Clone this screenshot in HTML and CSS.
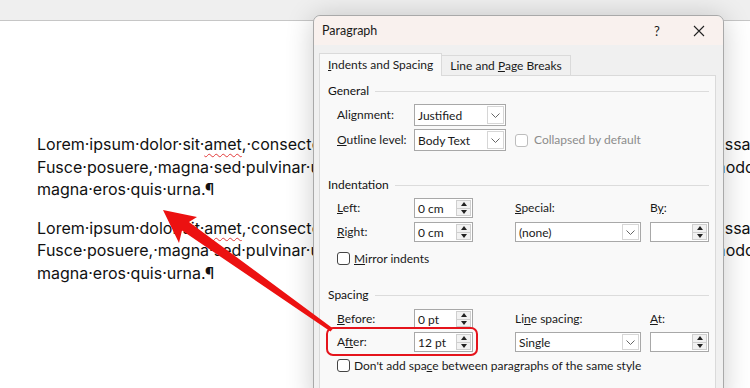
FILE: index.html
```html
<!DOCTYPE html>
<html lang="en">
<head>
    <meta charset="UTF-8">
    <meta name="viewport" content="width=device-width, initial-scale=1.0">
    <title>Paragraph</title>
    <link rel="stylesheet" href="styles.css">
</head>
<body>
    <div class="ribbon"></div>
    <div class="page">
        <p class="para">
            <span class="ln">Lorem·ipsum·dolor·sit·<span class="typo">amet</span>,·consec<span class="stretch">tetuer·adipiscing·elit.·Maecenas·porttitor·congue·m</span>assa.</span>
            <span class="ln">Fusce·posuere,·magna·sed·pulvinar·ultricies,·purus·lectus·malesuada·libero,·sit·amet·commodo</span>
            <span class="ln">magna·eros·quis·urna.¶</span>
        </p>
        <p class="para">
            <span class="ln">Lorem·ipsum·dolor·sit·<span class="typo">amet</span>,·consec<span class="stretch">tetuer·adipiscing·elit.·Maecenas·porttitor·congue·m</span>assa.</span>
            <span class="ln">Fusce·posuere,·magna·sed·pulvinar·ultricies,·purus·lectus·malesuada·libero,·sit·amet·commodo</span>
            <span class="ln">magna·eros·quis·urna.¶</span>
        </p>
    </div>

    <div class="dialog">
        <div class="titlebar">
            <span class="title">Paragraph</span>
            <span class="help">?</span>
            <span class="close">
                <svg width="12" height="12" viewBox="0 0 12 12"><path d="M1 1L11 11M11 1L1 11" stroke="#222" stroke-width="1.1" fill="none"/></svg>
            </span>
        </div>
        <div class="tabs">
            <div class="tab active"><u>I</u>ndents and Spacing</div>
            <div class="tab">Line and <u>P</u>age Breaks</div>
        </div>
        <div class="panel">
            <div class="group-title">General</div>
            <div class="grid general">
                <label>Ali<u>g</u>nment:</label>
                <div class="select w92"><span class="val">Justified</span><span class="drop"><svg width="9" height="5" viewBox="0 0 9 5"><path d="M0.5 0.5L4.5 4.5L8.5 0.5" stroke="#666" fill="none"/></svg></span></div>
                <span></span><span></span>
                <label><u>O</u>utline level:</label>
                <div class="select w92"><span class="val">Body Text</span><span class="drop"><svg width="9" height="5" viewBox="0 0 9 5"><path d="M0.5 0.5L4.5 4.5L8.5 0.5" stroke="#666" fill="none"/></svg></span></div>
                <div class="check disabled span2"><span class="box"></span>Collapsed by default</div>
            </div>

            <div class="group-title gap-indent">Indentation</div>
            <div class="grid boxes">
                <label><u>L</u>eft:</label>
                <div class="spin"><span class="val">0 cm</span><span class="arrows"><span class="up"></span><span class="down"></span></span></div>
                <label><u>S</u>pecial:</label>
                <label>B<u>y</u>:</label>
                <label><u>R</u>ight:</label>
                <div class="spin"><span class="val">0 cm</span><span class="arrows"><span class="up"></span><span class="down"></span></span></div>
                <div class="select w126"><span class="val">(none)</span><span class="drop"><svg width="9" height="5" viewBox="0 0 9 5"><path d="M0.5 0.5L4.5 4.5L8.5 0.5" stroke="#666" fill="none"/></svg></span></div>
                <div class="spin"><span class="val"></span><span class="arrows"><span class="up"></span><span class="down"></span></span></div>
                <div class="check span4 mirror"><span class="box"></span><span><u>M</u>irror indents</span></div>
            </div>

            <div class="group-title gap-spacing">Spacing</div>
            <div class="grid boxes spacing">
                <label><u>B</u>efore:</label>
                <div class="spin"><span class="val">0 pt</span><span class="arrows"><span class="up"></span><span class="down"></span></span></div>
                <label>Li<u>n</u>e spacing:</label>
                <label><u>A</u>t:</label>
                <label>A<u>f</u>ter:</label>
                <div class="spin"><span class="val">12 pt</span><span class="arrows"><span class="up"></span><span class="down"></span></span></div>
                <div class="select w126"><span class="val">Single</span><span class="drop"><svg width="9" height="5" viewBox="0 0 9 5"><path d="M0.5 0.5L4.5 4.5L8.5 0.5" stroke="#666" fill="none"/></svg></span></div>
                <div class="spin"><span class="val"></span><span class="arrows"><span class="up"></span><span class="down"></span></span></div>
                <div class="check span4 same-style"><span class="box"></span><span>Don't add spa<u>c</u>e between paragraphs of the same style</span></div>
            </div>
        </div>
    </div>

    <svg class="annotation" width="750" height="388" viewBox="0 0 750 388">
        <rect x="327" y="328" width="150" height="27" rx="6" fill="none" stroke="#e5141c" stroke-width="2"/>
        <polygon points="163,210 197,217 189,222 333,328.5 330.5,331.5 182,230.5 179,243" fill="#ec1111"/>
    </svg>
</body>
</html>
```

FILE: styles.css
```css
body, html {
    margin: 0;
    padding: 0;
    width: 100%;
    height: 100%;
    overflow: hidden;
}
body {
    position: relative;
    background-color: #efefef;
    font-family: Lato, "Noto Sans", sans-serif;
    font-size: 12px;
    color: #1a1a1a;
}
.ribbon {
    height: 20px;
    border-bottom: 1px solid #c6c6c6;
    background-color: #efefef;
}
.page {
    background-color: #fff;
    height: 367px;
    padding: 112px 0 0 37px;
    box-sizing: border-box;
    font-family: Inter, "Noto Sans", sans-serif;
    font-size: 16px;
    line-height: 22.5px;
    color: #111;
}
.para {
    margin: 0 0 16px;
}
.ln {
    display: block;
    white-space: nowrap;
}
.stretch {
    letter-spacing: 0.5px;
}
.typo {
    text-decoration: underline wavy #e23a3a;
    text-decoration-thickness: 1px;
    text-underline-offset: 3px;
}

/* dialog */
.dialog {
    position: absolute;
    left: 313px;
    top: 15px;
    width: 411px;
    height: 390px;
    box-sizing: border-box;
    background-color: #f0f0f0;
    border: 1px solid #a9a9a9;
    border-radius: 7px 7px 0 0;
    box-shadow: 0 2px 28px rgba(0,0,0,0.2);
}
.titlebar {
    height: 29px;
    display: flex;
    align-items: center;
    padding-left: 8px;
    background-color: #f9f1ee;
    border-radius: 7px 7px 0 0;
}
.title {
    flex: 1;
    font-size: 12.5px;
}
.help {
    width: 14px;
    font-size: 13px;
    text-align: center;
    margin-right: 29px;
}
.close {
    display: flex;
    margin-right: 18px;
}
.tabs {
    display: flex;
    align-items: flex-start;
    margin: 8px 0 0 5px;
    height: 22px;
}
.tab {
    box-sizing: border-box;
    height: 20px;
    margin-top: 2px;
    padding: 2px 8px 0;
    border: 1px solid #dadada;
    border-left: none;
    border-bottom: none;
    background-color: #f0f0f0;
}
.tab.active {
    height: 23px;
    margin-top: 0;
    padding-top: 3px;
    border-left: 1px solid #dadada;
    background-color: #f9f9f9;
    position: relative;
    z-index: 1;
}
.panel {
    width: 397px;
    height: 320px;
    box-sizing: border-box;
    margin-left: 5px;
    padding: 7px 6px 0 8px;
    background-color: #f9f9f9;
    border: 1px solid #dadada;
}
.group-title {
    display: flex;
    align-items: center;
    gap: 6px;
    line-height: 16px;
    color: #111;
}
.group-title::after {
    content: "";
    flex: 1;
    border-top: 1px solid #dcdcdc;
}
.gap-indent { margin-top: 26px; }
.gap-spacing { margin-top: 21px; }

.grid {
    display: grid;
    grid-template-columns: 77px 101px 135px 59px;
    align-items: center;
    margin: 5px 0 0 9px;
}
.general {
    grid-auto-rows: 22px;
    row-gap: 3px;
}
.boxes {
    grid-auto-rows: 20px;
    row-gap: 4px;
}
.spacing {
    margin-top: 6px;
    row-gap: 3px;
}
label {
    line-height: 16px;
}

.select, .spin {
    box-sizing: border-box;
    height: 100%;
    display: flex;
    align-items: center;
    background-color: #fff;
    border: 1px solid #a8a8a8;
}
.select .val {
    flex: 1;
    padding-left: 3px;
}
.w92 { width: 92px; }
.w126 { width: 126px; }
.drop {
    align-self: stretch;
    width: 17px;
    margin: 1px;
    display: flex;
    align-items: center;
    justify-content: center;
    border: 1px solid #d6d6d6;
    box-sizing: border-box;
}
.spin {
    width: 59px;
    padding: 1px;
}
.spin .val {
    flex: 1;
    padding-left: 2px;
}
.arrows {
    align-self: stretch;
    width: 15px;
    display: flex;
    flex-direction: column;
    border: 1px solid #cfcfcf;
    box-sizing: border-box;
    background-color: #f2f2f2;
}
.arrows span {
    flex: 1;
    display: flex;
    align-items: center;
    justify-content: center;
}
.arrows .up {
    border-bottom: 1px solid #cfcfcf;
}
.arrows .up::before {
    content: "";
    border: 3px solid transparent;
    border-bottom: 4px solid #222;
    border-top: none;
}
.arrows .down::before {
    content: "";
    border: 3px solid transparent;
    border-top: 4px solid #222;
    border-bottom: none;
}

.check {
    display: flex;
    align-items: center;
    gap: 4px;
    line-height: 16px;
}
.check .box {
    width: 11px;
    height: 11px;
    border: 1px solid #444;
    border-radius: 3px;
    background-color: #fff;
}
.check.disabled {
    color: #8c8c8c;
    gap: 6px;
}
.check.disabled .box {
    border-color: #bdbdbd;
}
.span2 { grid-column: span 2; }
.span4 { grid-column: span 4; }
.mirror { margin-top: 5px; }
.same-style { margin-top: 1px; }

.annotation {
    position: absolute;
    left: 0;
    top: 0;
    pointer-events: none;
}
```
